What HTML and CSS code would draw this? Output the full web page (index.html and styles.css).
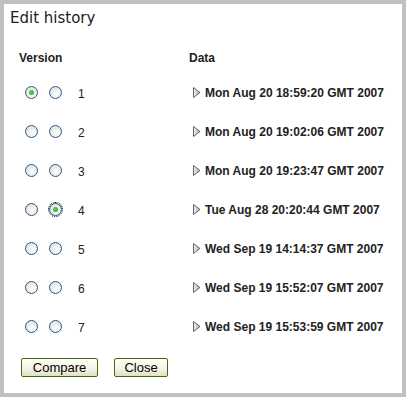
FILE: index.html
```html
<!DOCTYPE html>
<html>
<head>
<meta charset="utf-8">
<link rel="stylesheet" href="styles.css">
</head>
<body>
<div class="dialog">
  <div class="title">Edit history</div>
  <div class="grid">
    <div class="head vcol">Version</div>
    <div class="head">Data</div>

    <div class="vcell"><span class="radio on"></span><span class="radio"></span><span class="num">1</span></div>
    <div class="dcell"><svg class="tri" width="8" height="11" viewBox="0 0 8 11"><defs><linearGradient id="g" x1="0" x2="1"><stop offset="0" stop-color="#f4f4f4"/><stop offset="1" stop-color="#a8a8a8"/></linearGradient></defs><path d="M0.5 0.5 L7 5.5 L0.5 10.5 Z" fill="url(#g)" stroke="#666" stroke-width="1"/></svg>Mon Aug 20 18:59:20 GMT 2007</div>

    <div class="vcell"><span class="radio"></span><span class="radio"></span><span class="num">2</span></div>
    <div class="dcell"><svg class="tri" width="8" height="11" viewBox="0 0 8 11"><path d="M0.5 0.5 L7 5.5 L0.5 10.5 Z" fill="url(#g)" stroke="#666" stroke-width="1"/></svg>Mon Aug 20 19:02:06 GMT 2007</div>

    <div class="vcell"><span class="radio"></span><span class="radio"></span><span class="num">3</span></div>
    <div class="dcell"><svg class="tri" width="8" height="11" viewBox="0 0 8 11"><path d="M0.5 0.5 L7 5.5 L0.5 10.5 Z" fill="url(#g)" stroke="#666" stroke-width="1"/></svg>Mon Aug 20 19:23:47 GMT 2007</div>

    <div class="vcell"><span class="radio"></span><span class="radio on focus"></span><span class="num">4</span></div>
    <div class="dcell"><svg class="tri" width="8" height="11" viewBox="0 0 8 11"><path d="M0.5 0.5 L7 5.5 L0.5 10.5 Z" fill="url(#g)" stroke="#666" stroke-width="1"/></svg>Tue Aug 28 20:20:44 GMT 2007</div>

    <div class="vcell"><span class="radio"></span><span class="radio"></span><span class="num">5</span></div>
    <div class="dcell"><svg class="tri" width="8" height="11" viewBox="0 0 8 11"><path d="M0.5 0.5 L7 5.5 L0.5 10.5 Z" fill="url(#g)" stroke="#666" stroke-width="1"/></svg>Wed Sep 19 14:14:37 GMT 2007</div>

    <div class="vcell"><span class="radio"></span><span class="radio"></span><span class="num">6</span></div>
    <div class="dcell"><svg class="tri" width="8" height="11" viewBox="0 0 8 11"><path d="M0.5 0.5 L7 5.5 L0.5 10.5 Z" fill="url(#g)" stroke="#666" stroke-width="1"/></svg>Wed Sep 19 15:52:07 GMT 2007</div>

    <div class="vcell"><span class="radio"></span><span class="radio"></span><span class="num">7</span></div>
    <div class="dcell"><svg class="tri" width="8" height="11" viewBox="0 0 8 11"><path d="M0.5 0.5 L7 5.5 L0.5 10.5 Z" fill="url(#g)" stroke="#666" stroke-width="1"/></svg>Wed Sep 19 15:53:59 GMT 2007</div>
  </div>
  <div class="buttons">
    <button class="btn compare">Compare</button>
    <button class="btn close">Close</button>
  </div>
</div>
</body>
</html>
```

FILE: styles.css
```css
html, body {
  margin: 0;
  padding: 0;
  background: #fff;
}
.dialog {
  box-sizing: border-box;
  width: 406px;
  height: 397px;
  border: 4px solid #c0c0c0;
  background: #fff;
  font-family: "Liberation Sans", Arial, sans-serif;
  color: #222;
}
.title {
  font-family: "DejaVu Sans", Verdana, sans-serif;
  font-size: 15px;
  color: #222;
  padding: 4px 0 0 6px;
  height: 20px;
  line-height: 20px;
}
.grid {
  display: grid;
  grid-template-columns: 170px 1fr;
  grid-template-rows: 22px;
  grid-auto-rows: 39px;
  padding: 23px 0 0 15px;
}
.head {
  font-weight: bold;
  font-size: 12px;
  line-height: 14px;
  height: 14px;
  align-self: start;
  grid-row: 1;
}
.vcell {
  display: flex;
  align-items: center;
  padding-left: 6px;
}
.radio {
  box-sizing: border-box;
  width: 13px;
  height: 13px;
  border-radius: 50%;
  border: 1px solid #2a5a8c;
  background: radial-gradient(circle at 60% 65%, #ffffff 0%, #f0f0ee 40%, #d6d6d0 100%);
  margin-right: 11px;
  position: relative;
  flex: none;
}
.radio.on::after {
  content: "";
  position: absolute;
  left: 3px;
  top: 3px;
  width: 5px;
  height: 5px;
  border-radius: 50%;
  background: radial-gradient(circle at 40% 40%, #5cd65c, #1aa51a);
}
.radio.focus {
  outline: 1px dotted #000;
  outline-offset: 0px;
}
.num {
  font-size: 12px;
  margin-left: 5px;
  margin-top: 2px;
}
.dcell {
  display: flex;
  align-items: center;
  font-weight: bold;
  font-size: 12px;
  color: #222;
  padding-left: 4px;
}
.tri {
  margin-right: 4px;
  flex: none;
}
.buttons {
  display: flex;
  gap: 16px;
  padding: 12px 0 0 17px;
}
.btn {
  font-family: "Liberation Sans", Arial, sans-serif;
  font-size: 13px;
  color: #000;
  height: 19px;
  padding: 0 9px;
  border: 1px solid #3c6e0c;
  border-radius: 2px;
  background: linear-gradient(#fffff8, #f4f2e4 60%, #e2dfc8);
  line-height: 17px;
}
.compare { width: 77px; }
.close { width: 54px; }
```
